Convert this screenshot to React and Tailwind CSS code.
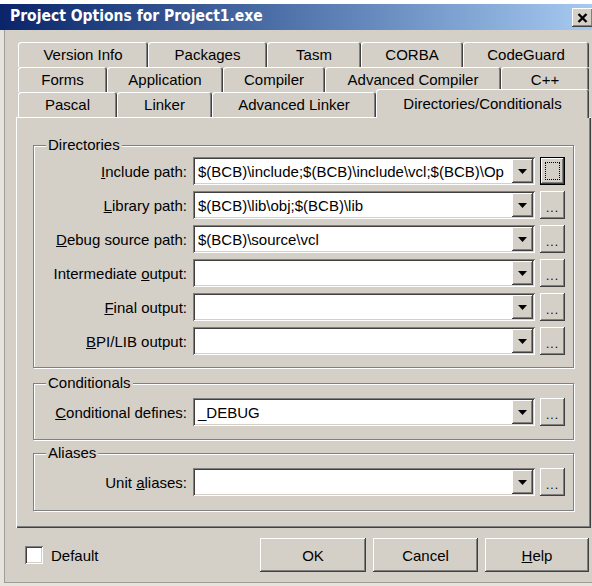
import React from "react";

// Classic 3D bevels
const raised =
  "shadow-[inset_-1px_-1px_#404040,inset_1px_1px_#ffffff,inset_-2px_-2px_#808080,inset_2px_2px_#d4d0c8]";
const sunken =
  "shadow-[inset_1px_1px_#808080,inset_-1px_-1px_#ffffff,inset_2px_2px_#404040,inset_-2px_-2px_#d4d0c8]";

const tabRows = [
  [
    { label: "Version Info", w: "w-[130px]" },
    { label: "Packages", w: "w-[119px]" },
    { label: "Tasm", w: "w-[94px]" },
    { label: "CORBA", w: "w-[102px]" },
    { label: "CodeGuard", w: "w-[126px]" },
  ],
  [
    { label: "Forms", w: "w-[89px]" },
    { label: "Application", w: "w-[116px]" },
    { label: "Compiler", w: "w-[102px]" },
    { label: "Advanced Compiler", w: "w-[176px]" },
    { label: "C++", w: "w-[88px]" },
  ],
  [
    { label: "Pascal", w: "w-[99px]" },
    { label: "Linker", w: "w-[95px]" },
    { label: "Advanced Linker", w: "w-[164px]" },
  ],
];

function Tab({ label, w }) {
  return (
    <div
      className={`${w} h-full shrink-0 flex items-center justify-center rounded-t-[3px] bg-[#d4d0c8] shadow-[inset_1px_1px_#ffffff,inset_-1px_0_#404040,inset_-2px_0_#808080]`}
    >
      {label}
    </div>
  );
}

function DropButton() {
  return (
    <div className={`w-[21px] h-full shrink-0 bg-[#d4d0c8] ${raised} flex items-center justify-center`}>
      <svg width="9" height="5" viewBox="0 0 9 5">
        <polygon points="0,0 9,0 4.5,5" fill="#000" />
      </svg>
    </div>
  );
}

function Combo({ value }) {
  return (
    <div className={`w-[342px] h-[28px] shrink-0 bg-white ${sunken} flex p-[2px]`}>
      <div className="flex-1 min-w-0 overflow-hidden whitespace-nowrap pl-[3px] flex items-center">
        {value}
      </div>
      <DropButton />
    </div>
  );
}

function Browse({ focused }) {
  if (focused) {
    return (
      <div className="w-[25px] h-[28px] shrink-0 border border-black">
        <div className={`w-full h-full bg-[#d4d0c8] ${raised} p-[4px]`}>
          <div className="w-full h-full border border-dotted border-black" />
        </div>
      </div>
    );
  }
  return (
    <div
      className={`w-[25px] h-[28px] shrink-0 bg-[#d4d0c8] ${raised} flex items-center justify-center text-[12px] leading-none pt-[6px] tracking-[1px]`}
    >
      ...
    </div>
  );
}

function Field({ label, value, focused }) {
  return (
    <div className="flex items-center h-[28px]">
      <div className="w-[153px] text-right whitespace-nowrap">{label}</div>
      <div className="w-[6px]" />
      <Combo value={value} />
      <div className="w-[5px]" />
      <Browse focused={focused} />
    </div>
  );
}

function Group({ title, className, children }) {
  return (
    <div
      className={`relative w-[541px] border border-[#808080] shadow-[inset_1px_1px_#ffffff,1px_1px_#ffffff] ${className}`}
    >
      <div className="absolute left-[12px] top-[-10px] px-[2px] bg-[#d4d0c8] leading-[18px]">{title}</div>
      {children}
    </div>
  );
}

function Button({ w, children }) {
  return (
    <div className={`${w} h-[34px] bg-[#d4d0c8] ${raised} flex items-center justify-center`}>
      {children}
    </div>
  );
}

export default function App() {
  return (
    <div className="w-[592px] h-[586px] overflow-hidden bg-[#e6e3dd] flex flex-col font-['Liberation_Sans',Arial,sans-serif] text-[15px] text-black leading-none">
      <div className="h-[4px] bg-white shrink-0" />

      {/* Caption */}
      <div className="h-[26px] shrink-0 bg-linear-to-r from-[#0a246a] to-[#a6caf0] flex items-start">
        <div className="pl-[10px] pt-[5px] text-white font-bold text-[15.5px] font-['DejaVu_Sans_Condensed','DejaVu_Sans',sans-serif] whitespace-nowrap">
          Project Options for Project1.exe
        </div>
        <div
          className={`ml-auto mt-[4px] -mr-[1px] w-[21px] h-[19px] bg-[#d4d0c8] ${raised} flex items-center justify-center`}
        >
          <svg width="11" height="10" viewBox="0 0 11 10">
            <path d="M1.5 1 L9.5 9 M9.5 1 L1.5 9" stroke="#000" strokeWidth="2.4" />
          </svg>
        </div>
      </div>

      {/* Client area */}
      <div className="ml-[4px] h-[553px] shrink-0 bg-[#d4d0c8] border-l border-b border-[#a09d97] pl-[11px] pt-[12px]">
        <div className="ml-[2px]">
          {tabRows.slice(0, 2).map((row, i) => (
            <div key={i} className="flex h-[25px]">
              {row.map((t) => (
                <Tab key={t.label} {...t} />
              ))}
            </div>
          ))}
          <div className="flex h-[25px]">
            {tabRows[2].map((t) => (
              <Tab key={t.label} {...t} />
            ))}
            <div className="relative z-10 w-[213px] h-[29px] -mt-[3px] shrink-0 rounded-t-[3px] bg-[#d4d0c8] shadow-[inset_1px_1px_#ffffff,inset_-1px_0_#404040,inset_-2px_0_#808080] flex justify-center pt-[7px]">
              Directories/Conditionals
            </div>
          </div>
        </div>

        <div className="w-[575px] h-[411px] shadow-[inset_1px_1px_#ffffff,inset_-1px_-1px_#404040,inset_-2px_-2px_#808080] pl-[17px] pt-[28px]">
          <Group title="Directories" className="pt-[11px] pb-[12px]">
            <div className="flex flex-col gap-[6px]">
              <Field
                label={<><u>I</u>nclude path:</>}
                value="$(BCB)\include;$(BCB)\include\vcl;$(BCB)\Op"
                focused
              />
              <Field label={<><u>L</u>ibrary path:</>} value="$(BCB)\lib\obj;$(BCB)\lib" />
              <Field label={<><u>D</u>ebug source path:</>} value="$(BCB)\source\vcl" />
              <Field label={<>Intermediate <u>o</u>utput:</>} value="" />
              <Field label={<><u>F</u>inal output:</>} value="" />
              <Field label={<><u>B</u>PI/LIB output:</>} value="" />
            </div>
          </Group>

          <Group title="Conditionals" className="mt-[15px] pt-[14px] pb-[13px]">
            <Field label={<><u>C</u>onditional defines:</>} value="_DEBUG" />
          </Group>

          <Group title="Aliases" className="mt-[13px] pt-[14px] pb-[14px]">
            <Field label={<>Unit <u>a</u>liases:</>} value="" />
          </Group>
        </div>

        {/* Footer */}
        <div className="mt-[10px] h-[34px] flex items-center pr-[3px]">
          <div className="ml-[9px] flex items-center">
            <div className={`w-[18px] h-[18px] bg-white ${sunken}`} />
            <div className="ml-[8px]">Default</div>
          </div>
          <div className="ml-auto flex gap-[7px]">
            <Button w="w-[106px]">OK</Button>
            <Button w="w-[105px]">Cancel</Button>
            <Button w="w-[104px]">
              <span>
                <u>H</u>elp
              </span>
            </Button>
          </div>
        </div>
      </div>
    </div>
  );
}
